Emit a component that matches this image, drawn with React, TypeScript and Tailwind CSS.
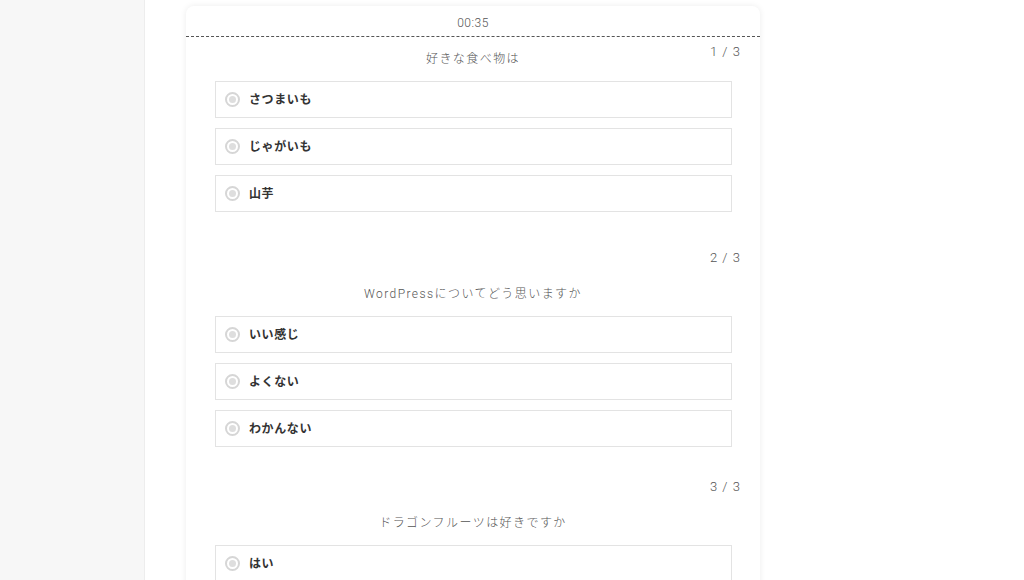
const questions = [
  { no: "1 / 3", text: "好きな食べ物は", options: ["さつまいも", "じゃがいも", "山芋"] },
  { no: "2 / 3", text: "WordPressについてどう思いますか", options: ["いい感じ", "よくない", "わかんない"] },
  { no: "3 / 3", text: "ドラゴンフルーツは好きですか", options: ["はい"] },
];

function Radio() {
  return (
    <span className="w-[15px] h-[15px] rounded-full border-2 border-[#d6d6d6] flex items-center justify-center shrink-0">
      <span className="w-[7px] h-[7px] rounded-full bg-[#dedede]" />
    </span>
  );
}

export default function App() {
  return (
    <div
      className="h-[580px] w-full flex overflow-hidden bg-white"
      style={{ fontFamily: 'Roboto, "Noto Sans CJK JP", sans-serif' }}
    >
      <aside className="w-[145px] shrink-0 bg-[#f7f7f7] border-r border-[#ededed]" />
      <main className="flex-1 pl-[41px] pt-[6px]">
        <div className="w-[574px] bg-white rounded-t-[8px] shadow-[0_0_6px_rgba(0,0,0,0.08)] pb-6">
          <header className="h-[31px] pt-[3px] flex items-center justify-center border-b border-dashed border-[#555] text-[12px] font-light text-[#555] tracking-[0.04em]">
            00:35
          </header>
          {questions.map((q, i) => (
            <section
              key={q.no}
              className={i === 0 ? "pt-[5px]" : i === 1 ? "mt-[36px]" : "mt-[30px]"}
            >
              <div
                className={`h-[20px] flex items-center justify-end pr-[19px] text-[13px] font-light text-[#555] tracking-[0.08em] ${
                  i === 0 ? "-mb-[13px]" : "mb-[16px]"
                }`}
              >
                {q.no}
              </div>
              <p className="h-[20px] flex items-center justify-center text-[12px] font-light text-[#555] tracking-[0.12em] mb-[12px]">
                {q.text}
              </p>
              <ul className="flex flex-col gap-[10px] pl-[29px] pr-[28px]">
                {q.options.map((o) => (
                  <li
                    key={o}
                    className="h-[37px] border border-[#e3e3e3] flex items-center gap-[9px] pl-[9px] text-[12px] font-bold text-[#333] tracking-[0.05em]"
                  >
                    <Radio />
                    {o}
                  </li>
                ))}
              </ul>
            </section>
          ))}
        </div>
      </main>
    </div>
  );
}
